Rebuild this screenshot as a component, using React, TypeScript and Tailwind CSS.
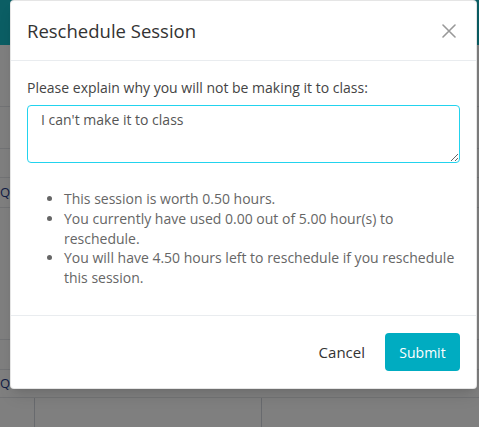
export default function App() {
  return (
    <div
      className="relative h-[427px] w-[479px] overflow-hidden bg-white"
      style={{ fontFamily: '"Open Sans", sans-serif' }}
    >
      {/* page behind the dialog */}
      <div className="h-[45px] bg-[#17bcc8]" />
      <div className="flex flex-col text-[13px] text-[#1e3a8a]">
        <div className="h-[62px] border-b border-gray-200" />
        <div className="h-[42px] border-b border-gray-200" />
        <div className="h-[29px] border-b border-gray-200" />
        <div className="flex h-[30px] items-center border-b border-gray-200">Qu</div>
        <div className="h-[132px] border-b border-gray-200" />
        <div className="h-[30px] border-b border-gray-200" />
        <div className="flex h-[27px] items-center">Qu</div>
        <div className="grid h-[40px] grid-cols-[35px_227px_1fr] border-t border-gray-200">
          <div className="border-r border-gray-300" />
          <div className="border-r border-gray-300" />
          <div />
        </div>
      </div>

      {/* overlay */}
      <div className="absolute inset-0 bg-black/50" />

      {/* dialog */}
      <div className="absolute left-[10px] top-0 flex h-[389px] w-[467px] flex-col rounded-[4px] border border-black/10 bg-white shadow-lg">
        <div className="flex h-[60px] shrink-0 items-center justify-between border-b border-[#e9ecef] px-4">
          <h2 className="text-[18.5px] text-[#333]">Reschedule Session</h2>
          <button className="mr-[4px] text-[#999]">
            <svg width="14" height="14" viewBox="0 0 14 14" fill="none" stroke="currentColor" strokeWidth="1.6" strokeLinecap="round">
              <path d="M1 1L13 13M13 1L1 13" />
            </svg>
          </button>
        </div>

        <div className="flex-1 px-4 pt-[16px]">
          <label className="block text-[14px] leading-[22px] text-[#444]">
            Please explain why you will not be making it to class:
          </label>
          <textarea
            className="mt-[6px] block h-[58px] w-full resize-y rounded-[4px] border border-[#22d3ee] px-[13px] pb-[6px] pt-[3px] text-[14px] leading-[22px] text-[#555] outline-none"
            defaultValue="I can't make it to class"
          />
          <ul className="mt-[26px] list-disc pl-[37px] text-[14px] leading-[19.8px] text-[#666]">
            <li>This session is worth 0.50 hours.</li>
            <li>
              You currently have used 0.00 out of 5.00 hour(s) to<br />
              reschedule.
            </li>
            <li>
              You will have 4.50 hours left to reschedule if you reschedule<br />
              this session.
            </li>
          </ul>
        </div>

        <div className="flex h-[73px] shrink-0 items-center justify-end gap-[20px] border-t border-[#e9ecef] px-4">
          <button className="text-[15px] text-[#333]">Cancel</button>
          <button className="h-[38px] w-[75px] rounded-[4px] bg-[#00acc1] text-[14px] font-medium text-white">
            Submit
          </button>
        </div>
      </div>
    </div>
  );
}
